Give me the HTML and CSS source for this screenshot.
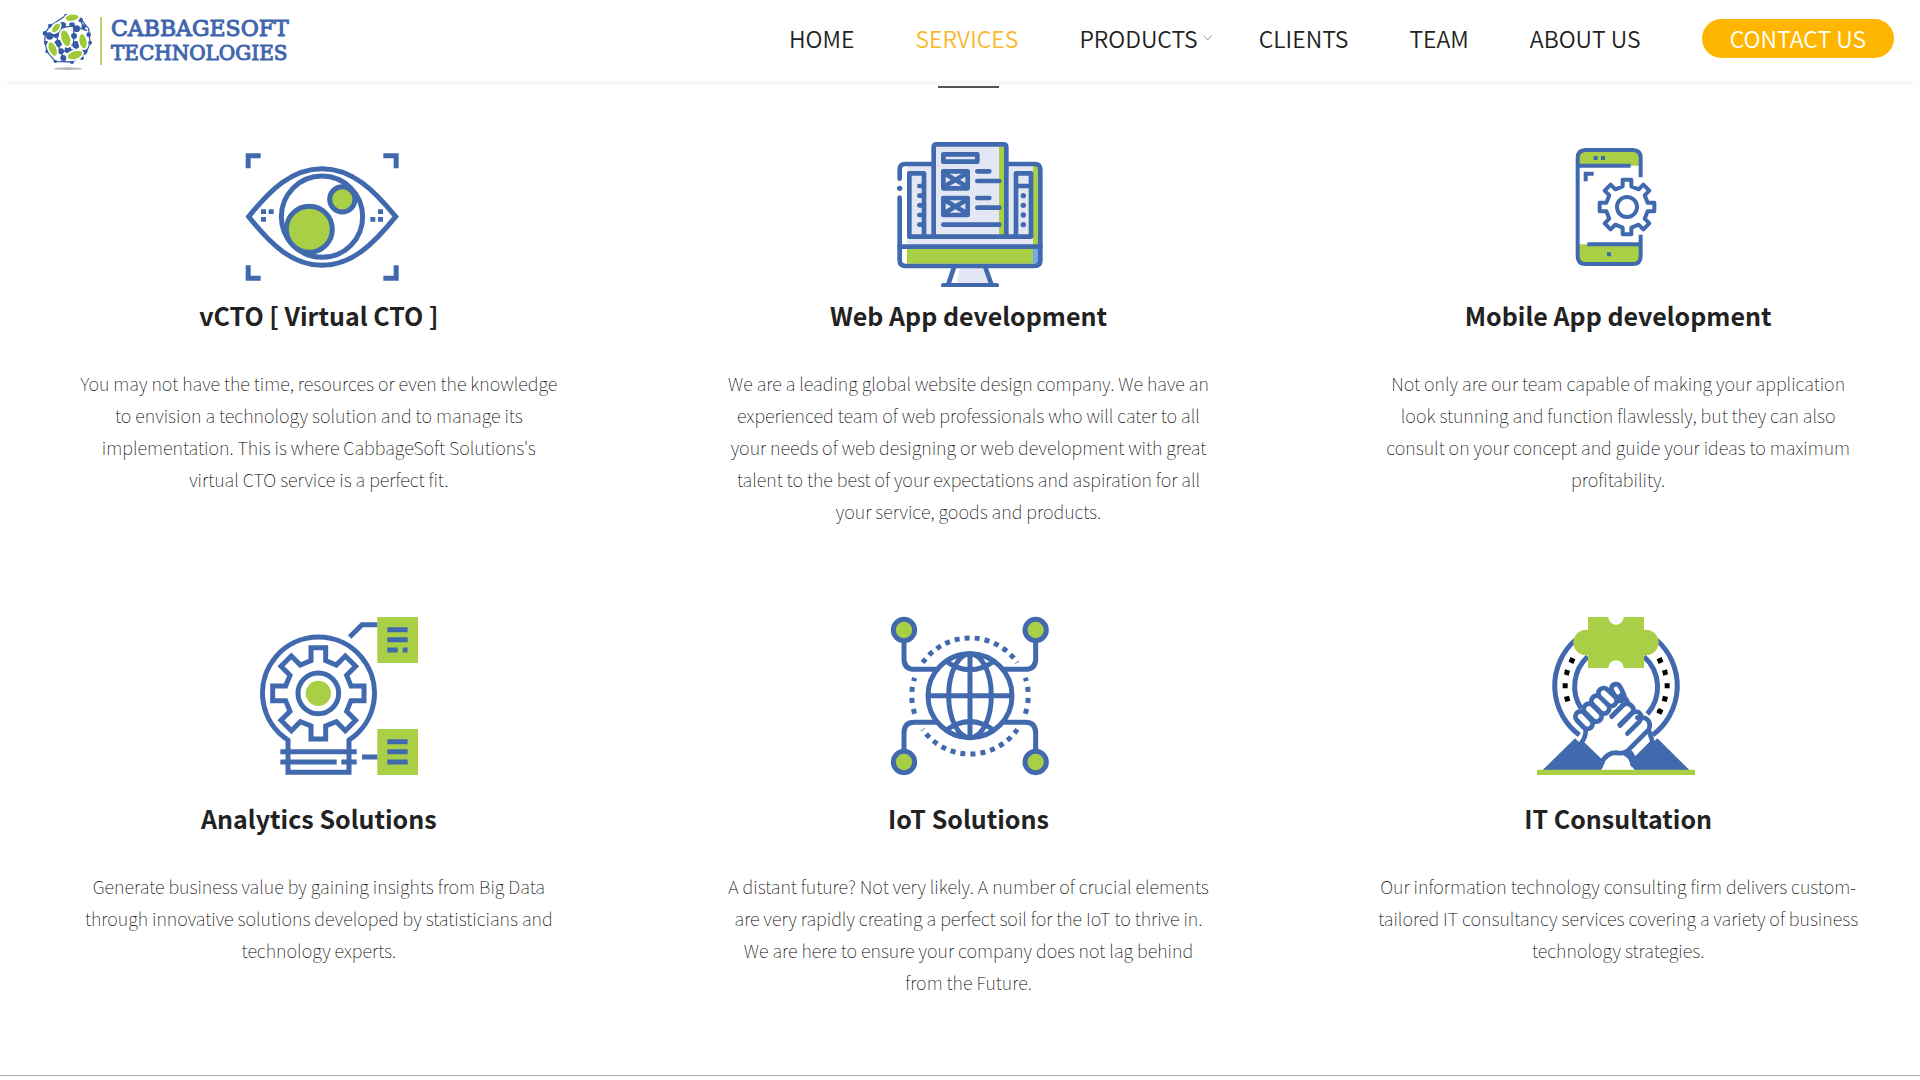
FILE: index.html
```html
<!DOCTYPE html>
<html lang="en">
<head>
<meta charset="utf-8">
<title>CabbageSoft Technologies - Services</title>
<link rel="stylesheet" href="styles.css">
</head>
<body>
<header class="header">
  <a class="logo" href="#" aria-label="CabbageSoft Technologies">
    <svg class="logo-mark" viewBox="123 33 156 180" aria-hidden="true">
      <ellipse cx="204" cy="206" rx="42" ry="4" fill="#b5b5b5"/>
      <g fill="none" stroke="#3f66ad" stroke-width="4">
        <path d="M136 98L150 78 198 46 240 54 266 86 270 128 258 160 216 186 166 184 142 156 134 126Z"/>
        <path d="M134 98L172 106 186 82 220 78 262 92M134 126L172 130 220 136 268 128M150 78L186 82M198 46L220 78 222 106 220 136 236 152 258 160M172 106V130L182 156 196 184M142 156L182 156 212 150 236 152M240 54L254 92"/>
      </g>
      <g fill="#3559a5">
        <circle cx="135" cy="100" r="7"/><circle cx="150" cy="77" r="6"/><circle cx="149" cy="108" r="11"/><circle cx="138" cy="128" r="6"/>
        <circle cx="168" cy="105" r="9"/><circle cx="175" cy="130" r="11"/><circle cx="188" cy="76" r="10"/><circle cx="199" cy="48" r="7"/>
        <circle cx="216" cy="73" r="8"/><circle cx="230" cy="86" r="10"/><circle cx="242" cy="60" r="7"/><circle cx="251" cy="80" r="7"/>
        <circle cx="222" cy="108" r="9"/><circle cx="228" cy="134" r="11"/><circle cx="266" cy="104" r="7"/><circle cx="270" cy="128" r="6"/>
        <circle cx="204" cy="149" r="10"/><circle cx="183" cy="154" r="9"/><circle cx="254" cy="153" r="8"/><circle cx="190" cy="174" r="9"/>
        <circle cx="142" cy="154" r="6"/><circle cx="166" cy="184" r="5"/><circle cx="216" cy="186" r="6"/><circle cx="246" cy="174" r="6"/>
      </g>
      <g fill="#9fca3c" stroke="#fff" stroke-width="5">
        <ellipse cx="216" cy="53" rx="22" ry="12" transform="rotate(-8 216 53)"/>
        <ellipse cx="168" cy="84" rx="18" ry="11" transform="rotate(-50 168 84)"/>
        <ellipse cx="197" cy="115" rx="27" ry="15" transform="rotate(72 197 115)"/>
        <ellipse cx="249" cy="124" rx="24" ry="13" transform="rotate(78 249 124)"/>
        <ellipse cx="158" cy="147" rx="24" ry="13" transform="rotate(66 158 147)"/>
        <ellipse cx="225" cy="165" rx="25" ry="14" transform="rotate(-18 225 165)"/>
      </g>
    </svg>
    <span class="logo-text"><span class="logo-top">CABBAGESOFT</span><span class="logo-bottom">TECHNOLOGIES</span></span>
  </a>
  <nav class="nav">
    <a href="#">HOME</a>
    <a class="active" href="#">SERVICES</a>
    <a class="has-menu" href="#">PRODUCTS<svg class="chevron" viewBox="0 0 9 6" aria-hidden="true"><path d="M.5 .5L4.500 5 8.500 .5" fill="none" stroke="#999"/></svg></a>
    <a href="#">CLIENTS</a>
    <a href="#">TEAM</a>
    <a href="#">ABOUT US</a>
    <a class="contact" href="#">CONTACT US</a>
  </nav>
</header>
<main class="main">
  <hr class="rule">
  <section class="services">
    <article class="service">
      <svg class="icon" viewBox="-3 -99 600 570" aria-hidden="true">
        <g class="line w15">
          <path d="M84.500 115V77H122M490 77H528.500V115M84.500 406V444.500H122M490 444.500H528.500V406"/>
          <path d="M86 260C150 180 215 116 306 116S462 180 527 260C462 340 397 406 306 406S150 340 86 260Z"/>
          <circle cx="306" cy="260" r="122"/>
          <circle class="green" cx="268" cy="298" r="69"/><circle class="green" cx="367" cy="208" r="38"/>
        </g>
        <path class="blue" d="M123 238h15v14h-15zM146 238h15v14h-15zM123 261h15v14h-15zM474 238h15v14h-15zM451 261h15v14h-15zM474 261h15v14h-15z"/>
      </svg>
      <h2>vCTO [ Virtual CTO ]</h2>
      <p>You may not have the time, resources or even the knowledge to envision a technology solution and to manage its implementation. This is where CabbageSoft Solutions's virtual CTO service is a perfect fit.</p>
    </article>
    <article class="service">
      <svg class="icon" viewBox="-36 -99 600 570" aria-hidden="true">
        <path class="pale" d="M82 105H480V345H82zM160 45H378V320H160zM224 412H314L332 466H224z"/>
        <path fill="#fff" d="M216 412H240L228 466H204z"/>
        <path class="green" d="M357 50H372V320H357zM459 108H474V344H459zM81 355H459V401H81z"/>
        <path fill="#77a7ed" d="M459 355H474V401H459z"/>
        <g class="line w14 round">
          <path d="M59 146V119Q59 102 76 102H160M380 102H464Q481 102 481 119V391Q481 408 464 408H76Q59 408 59 391V203"/>
          <path d="M59 350H481M161 320V52Q161 43 170 43H370Q379 43 379 52V320"/>
          <path d="M132 320V130H88V320H453V130H408V320M408 168H453"/>
          <path d="M118 168H132M118 197H132M118 226H132M118 255H132M118 284H132"/>
          <path d="M190 73H292V95H190zM190 124H263V175H190zM190 204H263V255H190zM200 134L253 165M253 134L200 165M200 214L253 245M253 214L200 245"/>
          <path d="M292 124H328M292 153H358M292 204H328M292 233H358M190 284H358"/>
          <path d="M221 415L206 460M317 415L333 460M190 466H350"/>
        </g>
        <g class="blue"><circle cx="59" cy="175" r="8"/><circle cx="430" cy="197" r="8"/><circle cx="430" cy="226" r="8"/><circle cx="430" cy="255" r="8"/><circle cx="430" cy="284" r="8"/></g>
      </svg>
      <h2>Web App development</h2>
      <p>We are a leading global website design company. We have an experienced team of web professionals who will cater to all your needs of web designing or web development with great talent to the best of your expectations and aspiration for all your service, goods and products.</p>
    </article>
    <article class="service">
      <svg class="icon" viewBox="-96 -99 600 570" aria-hidden="true">
        <path class="green" d="M83 107V82Q83 60 105 60H250Q272 60 272 82V107zM83 343H272V380Q272 402 250 402H105Q83 402 83 380z"/>
        <g class="line w12">
          <path d="M272 142V84Q272 60 248 60H107Q83 60 83 84V378Q83 402 107 402H248Q272 402 272 378V314M83 107H242M112 343H272M107 154V131H131"/>
          <g transform="translate(231 231)"><path stroke-linejoin="round" d="M-13-62V-82H13V-62L35-53 49-67 67-49 53-35 62-13H82V13H62L53 35 67 49 49 67 35 53 13 62V82H-13V62L-35 53-49 67-67 49-53 35-62 13H-82V-13H-62L-53-35-67-49-49-67-35-53Z"/><circle r="30"/></g>
        </g>
        <path class="blue" d="M131 78h12v12h-12zM153 78h12v12h-12zM171 367h12v12h-12z"/>
      </svg>
      <h2>Mobile App development</h2>
      <p>Not only are our team capable of making your application look stunning and function flawlessly, but they can also consult on your concept and guide your ideas to maximum profitability.</p>
    </article>
    <article class="service">
      <svg class="icon" viewBox="-63 0 600 570" aria-hidden="true">
        <path class="green" d="M412 51H534V189H412zM412 387H534V525H412z"/><circle class="green" cx="235" cy="280" r="38"/>
        <g class="line w15">
          <path d="M144 517V420A168 168 0 1 1 327 420V517ZM121 455H350M121 486H290M304 486H350M329 111L366 74H412M366 471H412"/>
          <path d="M442 89H503M442 119H503M442 150H473M488 150H503M442 425H503M442 455H503M442 486H503"/>
          <g transform="translate(235 280)"><circle r="61"/><path d="M-22-98V-137H22V-98L54-85 81-112 112-81 85-54 98-22H137V22H98L85 54 112 81 81 112 54 85 22 98V137H-22V98L-54 85-81 112-112 81-85 54-98 22H-137V-22H-98L-85-54-112-81-81-112-54-85Z"/></g>
        </g>
      </svg>
      <h2>Analytics Solutions</h2>
      <p>Generate business value by gaining insights from Big Data through innovative solutions developed by statisticians and technology experts.</p>
    </article>
    <article class="service">
      <svg class="icon" viewBox="-6 0 600 570" aria-hidden="true">
        <g class="line w15">
          <circle cx="300" cy="287" r="126"/><ellipse cx="300" cy="287" rx="64" ry="126"/>
          <path d="M300 161V413M174 287H426M226 182Q300 236 374 182M226 392Q300 338 374 392"/>
          <path d="M102 122V176Q102 208 134 208H204M497 122V176Q497 208 465 208H396M102 454V399Q102 367 134 367H204M497 454V399Q497 367 465 367H396"/>
          <g class="green"><circle cx="102" cy="90" r="32"/><circle cx="497" cy="90" r="32"/><circle cx="102" cy="486" r="32"/><circle cx="497" cy="486" r="32"/></g>
          <path stroke-dasharray="15 15" d="M158 188A173 173 0 0 1 442 188M442 388A173 173 0 0 1 158 388"/>
          <path stroke-dasharray="15 18" d="M134 341A173 173 0 0 1 134 233M466 341A173 173 0 0 0 466 233"/>
        </g>
      </svg>
      <h2>IoT Solutions</h2>
      <p>A distant future? Not very likely. A number of crucial elements are very rapidly creating a perfect soil for the IoT to thrive in. We are here to ensure your company does not lag behind from the Future.</p>
    </article>
    <article class="service">
      <svg class="icon" viewBox="-6 0 600 570" aria-hidden="true">
        <g class="line w15">
          <path d="M178 405A184 184 0 0 1 166 120M398 405A184 184 0 0 0 410 120M183 325A122 122 0 0 1 203 170M382 342A122 122 0 0 0 372 170"/>
        </g>
        <path class="green" d="M204 51H265A23 23 0 1 0 311 51H372V90A38 38 0 1 1 372 165V204H311A23 23 0 1 0 265 204H204V165A38 38 0 1 1 204 90Z"/>
        <path fill="#000" d="M151 171l15 7-6 14-14-7zM135 208l15 4-4 15-14-4zM128 250h15v15h-15zM132 291l15-4 4 15-15 4zM425 171l-15 7 6 14 14-7zM441 208l-15 4 4 15 14-4zM434 250h15v15h-15zM444 291l-15-4-4 15 15 4zM411 331l6-7 13 7-6 13-14-6z"/>
        <path fill="#fff" d="M200 375L300 275 390 370 400 420 330 495H245L185 430Z"/>
        <g class="line w14" stroke-linecap="round" stroke-linejoin="round">
          <path d="M197 386Q199 410 184 428L247 489M352 353L375 354Q396 366 386 389L397 424M386 389L324 451Q312 463 290 458Q258 458 243 492M324 451Q338 462 343 481L397 427M312 459Q335 470 338 494"/>
          <path d="M275 350L310 315Q322 305 335 318Q345 328 336 340L300 377M336 340Q354 328 363 346Q366 355 357 366L322 401M300 291Q322 292 323 310"/>
        </g>
        <g fill="none" stroke-linecap="round">
          <g stroke="#4169ae" stroke-width="46"><path d="M182 350L202 371M207 327L229 349M230 303L252 325M251 280L274 302"/><path stroke-width="42" d="M288 266L299 289"/></g>
          <g stroke="#fff" stroke-width="17"><path d="M182 350L202 371M207 327L229 349M230 303L252 325M251 280L274 302"/><path stroke-width="13" d="M288 266L294 277"/></g>
        </g>
        <path class="line w14" d="M272 352L311 313M296 378L336 338"/>
        <path class="blue" d="M68 510L165 415 251 498 243 510ZM508 510L412 415 332 495 344 510Z"/>
        <path class="green" d="M51 509H525V525H51z"/>
      </svg>
      <h2>IT Consultation</h2>
      <p>Our information technology consulting firm delivers custom-tailored IT consultancy services covering a variety of business technology strategies.</p>
    </article>
  </section>
</main>
</body>
</html>
```
FILE: styles.css
```css
* { box-sizing: border-box; }
body { margin: 0; background: #fff; color: #222; font-family: "Noto Sans CJK JP", sans-serif; }
a { color: inherit; text-decoration: none; }

.header { display: flex; align-items: center; justify-content: space-between; height: 81px; padding: 0 26px 0 41px; background: #fff; box-shadow: 0 0 10px rgba(0, 0, 0, .08); }
.logo { display: flex; align-items: center; color: #3f66ad; }
.logo-mark { width: 52px; height: 60px; }
.logo-text { display: flex; flex-direction: column; margin-left: 7px; padding-left: 9px; border-left: 2px solid #b5d96b; font-family: "DejaVu Serif", serif; -webkit-text-stroke: 1px #3f66ad; }
.logo-top { font-size: 22px; line-height: 24px; }
.logo-bottom { font-size: 20px; line-height: 24px; }

.nav { display: flex; align-items: center; gap: 61px; padding-bottom: 4px; font-size: 23px; line-height: 38px; font-weight: 350; white-space: nowrap; }
.nav a { padding-bottom: 1px; }
.nav .active { color: #fbb829; }
.has-menu { position: relative; }
.chevron { position: absolute; left: 100%; top: 16px; width: 9px; height: 6px; margin-left: 5px; }
.nav .contact { padding: 0 28px 1px; border-radius: 20px; background: #ffb600; color: #fff; }

.main { padding: 0 57px 0 74px; border-bottom: 1px solid #aaa; }
.rule { width: 61px; height: 2px; margin: 5px auto 9px; border: 0; background: #555; }
.services { display: grid; grid-template-columns: repeat(3, 1fr); column-gap: 160px; padding-bottom: 4px; }
.service { display: flex; flex-direction: column; align-items: center; text-align: center; }
.icon { width: 200px; height: 190px; }
.service h2 { margin: 8px 0 32px; font-size: 25px; line-height: 40px; font-weight: 700; }
.service p { margin: 0 0 73px; padding: 0 3px; font-size: 18px; line-height: 32px; font-weight: 100; color: #000; }

.line { fill: none; stroke: #4169ae; }
.w12 { stroke-width: 12px; }
.w14 { stroke-width: 14px; }
.w15 { stroke-width: 15px; }
.round { stroke-linecap: round; stroke-linejoin: round; }
.green { fill: #a8cf45; }
.blue { fill: #4169ae; }
.pale { fill: #e2e7f3; }
```
